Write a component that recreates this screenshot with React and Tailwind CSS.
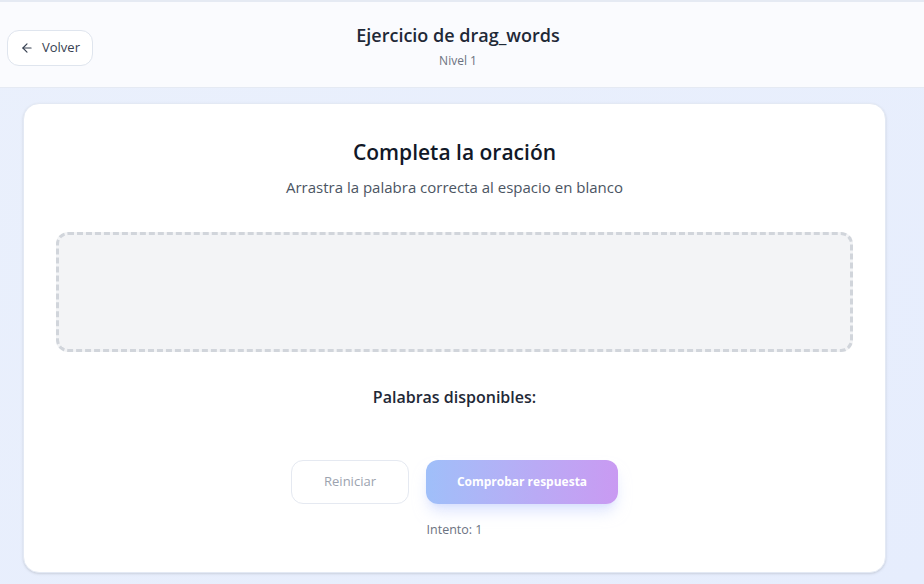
import { ArrowLeft } from 'lucide-react';

export default function App() {
  return (
    <div
      className="min-h-screen w-full bg-gradient-to-br from-[#eaf0fc] to-[#e6edfd] text-[#1f2937]"
      style={{ fontFamily: '"Open Sans", "Noto Sans", sans-serif' }}
    >
      <header className="h-[88px] border-t-2 border-b border-[#e5eaf3] bg-[#fafbfe] flex items-center relative pr-2">
        <button className="absolute left-[7px] top-[28px] h-[36px] px-3 flex items-center gap-2 rounded-xl border border-[#dfe5ee] bg-white text-[13px] text-[#374151]">
          <ArrowLeft size={14} strokeWidth={2} />
          Volver
        </button>
        <div className="flex-1 flex flex-col items-center pt-[4px]">
          <h1 className="text-[18px] font-semibold leading-6 text-[#1f2937]">Ejercicio de drag_words</h1>
          <p className="text-[12px] text-[#6b7280] mt-[5px]">Nivel 1</p>
        </div>
      </header>

      <main className="pl-[23px] pr-[38px] pt-[15px] pb-3">
        <div className="bg-white rounded-2xl border border-[#e3e9f4] shadow-sm px-8 pt-[32px] pb-[33px] flex flex-col items-center">
          <h2 className="text-[21px] font-semibold leading-8 text-[#111827]">Completa la oración</h2>
          <p className="mt-[8px] text-[15px] text-[#4b5563]">Arrastra la palabra correcta al espacio en blanco</p>

          <div className="mt-[33px] w-full h-[120px] rounded-xl border-[3px] border-dashed border-[#d1d5db] bg-[#f3f4f6]"></div>

          <h3 className="mt-[33px] text-[16px] font-semibold text-[#1f2937]">Palabras disponibles:</h3>

          <div className="mt-[51px] flex gap-[17px]">
            <button className="w-[118px] h-[44px] rounded-xl border border-[#e5e9f1] bg-white text-[13px] text-[#9ca3af]">
              Reiniciar
            </button>
            <button className="w-[192px] h-[44px] rounded-xl bg-gradient-to-r from-[#9fbff9] to-[#c99af2] text-white text-[12px] font-bold shadow-lg shadow-[#c7d2fe]/60">
              Comprobar respuesta
            </button>
          </div>

          <p className="mt-[17px] text-[12.5px] text-[#6b7280]">Intento: 1</p>
        </div>
      </main>
    </div>
  );
}
